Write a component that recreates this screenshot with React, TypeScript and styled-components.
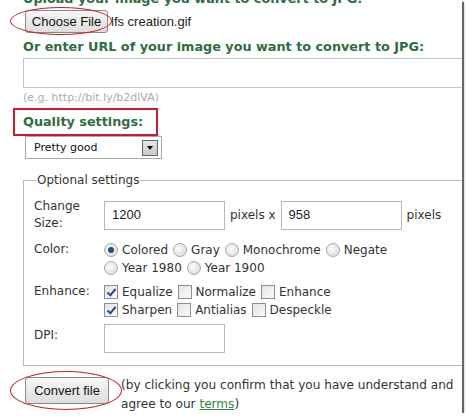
import React from 'react';
import styled, { createGlobalStyle } from 'styled-components';

const GlobalStyle = createGlobalStyle`
  body {
    margin: 0;
    background: #fff;
  }
`;

const Frame = styled.div`
  position: relative;
  width: 462px;
  height: 413px;
  background: #fff;
  overflow: hidden;
  box-shadow: 2px 2px 1px rgba(0, 0, 0, 0.6);
  font-family: "DejaVu Sans", Verdana, sans-serif;
  font-size: 12px;
  color: #333;
`;

const Content = styled.div`
  margin-top: -9px;
  padding-left: 23px;
`;

const Heading = styled.div`
  font-weight: bold;
  font-size: 12.8px;
  color: #2d6e3e;
  line-height: 16px;
  white-space: nowrap;
`;

const FileRow = styled.div`
  display: flex;
  align-items: center;
  gap: 3px;
  margin: 1px 0 0 2px;
  height: 27px;
`;

const Marked = styled.div`
  position: relative;
  display: inline-flex;
`;

const Ellipse = styled.div<{ $w: number; $h: number; $dx: number; $dy: number }>`
  position: absolute;
  left: ${p => p.$dx}px;
  top: ${p => p.$dy}px;
  width: ${p => p.$w}px;
  height: ${p => p.$h}px;
  border: 1.5px solid #c8202a;
  border-radius: 50%;
  pointer-events: none;
`;

const Box = styled.div`
  position: absolute;
  left: -10px;
  top: -6px;
  width: 141px;
  height: 24px;
  border: 2px solid #c8202a;
  pointer-events: none;
`;

const XPButton = styled.button<{ $w: number; $h: number }>`
  width: ${p => p.$w}px;
  height: ${p => p.$h}px;
  font-family: "Liberation Sans", Arial, sans-serif;
  font-size: 13px;
  color: #111;
  border: 1px solid #8a8a8a;
  border-radius: 3px;
  background: linear-gradient(#f6f6f6, #dedede);
  padding: 0;
`;

const FileName = styled.span`
  font-family: "Liberation Sans", Arial, sans-serif;
  font-size: 13px;
  color: #222;
`;

const UrlInput = styled.div`
  margin-top: 3px;
  height: 28px;
  border: 1px solid #c6c6c6;
  margin-right: -10px;
`;

const Hint = styled.div`
  margin-top: 3px;
  font-size: 11px;
  color: #aaa;
  line-height: 14px;
`;

const QualityWrap = styled.div`
  margin-top: 9px;
`;

const SelectBox = styled.div`
  margin: 6px 0 0 2px;
  width: 124px;
  height: 21px;
  border: 1px solid #aaa;
  display: flex;
  align-items: center;
  justify-content: space-between;
  padding: 0 3px 0 8px;
  box-sizing: content-box;
  font-size: 11px;
  color: #111;
`;

const ArrowButton = styled.span`
  width: 14px;
  height: 14px;
  border: 1px solid #666;
  background: linear-gradient(#e8e8e8, #c8c8c8);
  display: flex;
  align-items: center;
  justify-content: center;
  &::after {
    content: '';
    border-left: 3px solid transparent;
    border-right: 3px solid transparent;
    border-top: 4px solid #000;
  }
`;

const Fieldset = styled.fieldset`
  margin: 14px -10px 0 0;
  padding: 11px 0 12px 10px;
  border: 1px solid #b8b8b8;
  border-right: none;
`;

const Legend = styled.legend`
  padding: 0 1px;
  margin-left: 2px;
  font-size: 12px;
  color: #333;
`;

const Row = styled.div<{ $mt?: number }>`
  display: grid;
  grid-template-columns: 70px 1fr;
  margin-top: ${p => p.$mt ?? 0}px;
  line-height: 18px;
`;

const Label = styled.div<{ $pt?: number }>`
  padding-top: ${p => p.$pt ?? 0}px;
  line-height: 17px;
`;

const SizeLine = styled.div`
  display: flex;
  align-items: center;
  gap: 5px;
`;

const TextBox = styled.div`
  width: 121px;
  height: 29px;
  border: 1px solid #b8b8b8;
  display: flex;
  align-items: center;
  padding-left: 7px;
  box-sizing: border-box;
  font-family: "Liberation Sans", Arial, sans-serif;
  font-size: 13px;
  color: #222;
`;

const Options = styled.div<{ $w: number }>`
  display: flex;
  flex-wrap: wrap;
  width: ${p => p.$w}px;
`;

const Option = styled.span`
  display: inline-flex;
  align-items: center;
  margin-right: 5px;
  white-space: nowrap;
`;

const Radio = styled.span<{ $on?: boolean }>`
  width: 12px;
  height: 12px;
  border-radius: 50%;
  border: 1px solid #a8a8a8;
  background: radial-gradient(circle at 40% 40%, #fdfdfd, #d4d4d4);
  margin-right: 4px;
  display: inline-flex;
  align-items: center;
  justify-content: center;
  &::after {
    content: '';
    display: ${p => (p.$on ? 'block' : 'none')};
    width: 6px;
    height: 6px;
    border-radius: 50%;
    background: #1d4f7a;
  }
`;

const Check = styled.span<{ $on?: boolean }>`
  position: relative;
  width: 12px;
  height: 12px;
  border: 1px solid #8e8e8e;
  background: linear-gradient(135deg, #e4e4e4, #fafafa);
  margin-right: 4px;
  display: inline-block;
  &::after {
    content: '';
    display: ${p => (p.$on ? 'block' : 'none')};
    position: absolute;
    left: 4px;
    top: 1px;
    width: 3px;
    height: 7px;
    border: solid #2a4f8a;
    border-width: 0 2px 2px 0;
    transform: rotate(40deg);
  }
`;

const Footer = styled.div`
  display: flex;
  align-items: flex-start;
  gap: 12px;
  margin: 11px 0 0 2px;
`;

const Note = styled.div`
  margin-top: -1px;
  font-size: 12.1px;
  line-height: 19px;
  color: #333;
  white-space: nowrap;
`;

const Terms = styled.a`
  color: #2d8a3e;
  text-decoration: underline;
`;

export default function App() {
  const colors = ['Colored', 'Gray', 'Monochrome', 'Negate', 'Year 1980', 'Year 1900'];
  const enhance = [
    { label: 'Equalize', on: true },
    { label: 'Normalize', on: false },
    { label: 'Enhance', on: false },
    { label: 'Sharpen', on: true },
    { label: 'Antialias', on: false },
    { label: 'Despeckle', on: false },
  ];

  return (
    <>
      <GlobalStyle />
      <Frame>
        <Content>
          <Heading>Upload your image you want to convert to JPG:</Heading>
          <FileRow>
            <Marked>
              <XPButton $w={83} $h={23}>Choose File</XPButton>
              <Ellipse $w={100} $h={26} $dx={-15} $dy={-3} />
            </Marked>
            <FileName>lfs creation.gif</FileName>
          </FileRow>
          <Heading style={{ marginTop: 4 }}>Or enter URL of your image you want to convert to JPG:</Heading>
          <UrlInput />
          <Hint>(e.g. http://bit.ly/b2dlVA)</Hint>
          <QualityWrap>
            <Marked>
              <Heading>Quality settings:</Heading>
              <Box />
            </Marked>
          </QualityWrap>
          <SelectBox>
            Pretty good
            <ArrowButton />
          </SelectBox>

          <Fieldset>
            <Legend>Optional settings</Legend>
            <Row>
              <Label>Change<br />Size:</Label>
              <SizeLine>
                <TextBox>1200</TextBox>
                pixels x
                <TextBox>958</TextBox>
                pixels
              </SizeLine>
            </Row>
            <Row $mt={9}>
              <Label>Color:</Label>
              <Options $w={310}>
                {colors.map((c, i) => (
                  <Option key={c}>
                    <Radio $on={i === 0} />
                    {c}
                  </Option>
                ))}
              </Options>
            </Row>
            <Row $mt={6}>
              <Label>Enhance:</Label>
              <Options $w={250}>
                {enhance.map(e => (
                  <Option key={e.label}>
                    <Check $on={e.on} />
                    {e.label}
                  </Option>
                ))}
              </Options>
            </Row>
            <Row $mt={5}>
              <Label $pt={3}>DPI:</Label>
              <TextBox />
            </Row>
          </Fieldset>

          <Footer>
            <Marked>
              <XPButton $w={84} $h={27}>Convert file</XPButton>
              <Ellipse $w={110} $h={37} $dx={-15} $dy={-6} />
            </Marked>
            <Note>
              (by clicking you confirm that you have understand and
              <br />
              agree to our <Terms href="#">terms</Terms>)
            </Note>
          </Footer>
        </Content>
      </Frame>
    </>
  );
}
